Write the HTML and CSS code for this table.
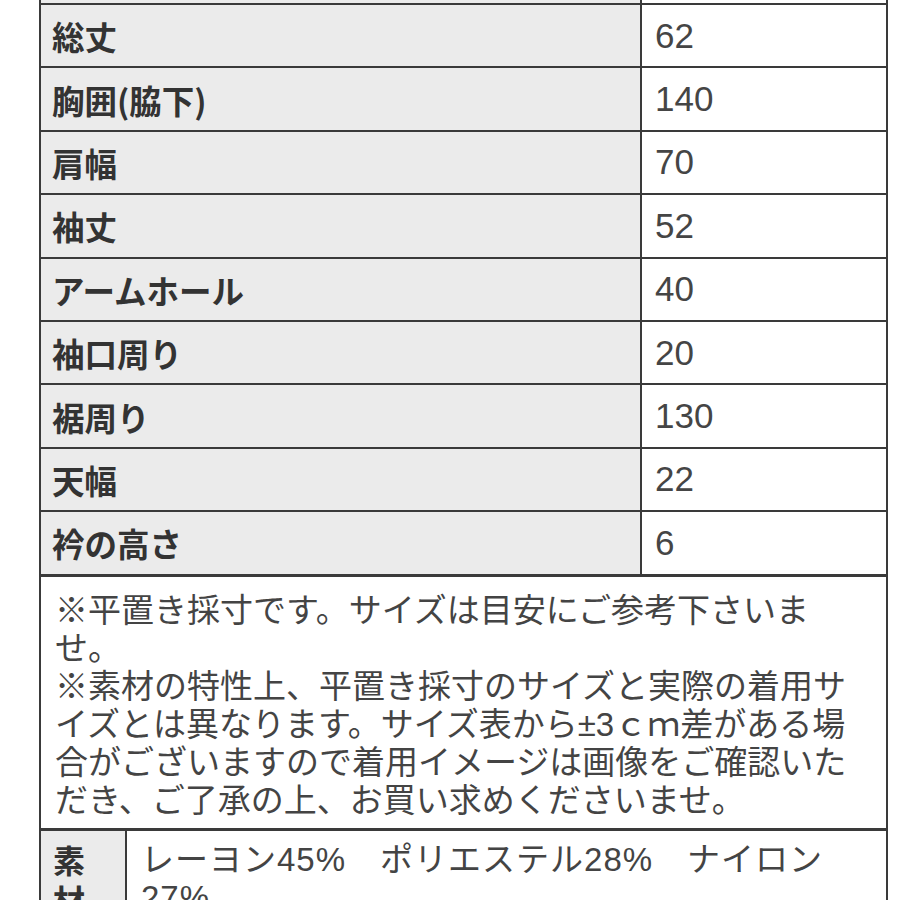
FILE: index.html
```html
<!DOCTYPE html>
<html lang="ja">
<head>
<meta charset="utf-8">
<title>サイズ表</title>
<link rel="stylesheet" href="styles.css">
</head>
<body>
<div class="sheet">
  <div class="row"><div class="label"></div><div class="value"></div></div>
  <div class="row"><div class="label">総丈</div><div class="value">62</div></div>
  <div class="row"><div class="label">胸囲(脇下)</div><div class="value">140</div></div>
  <div class="row"><div class="label">肩幅</div><div class="value">70</div></div>
  <div class="row"><div class="label">袖丈</div><div class="value">52</div></div>
  <div class="row"><div class="label">アームホール</div><div class="value">40</div></div>
  <div class="row"><div class="label">袖口周り</div><div class="value">20</div></div>
  <div class="row"><div class="label">裾周り</div><div class="value">130</div></div>
  <div class="row"><div class="label">天幅</div><div class="value">22</div></div>
  <div class="row row-last"><div class="label">衿の高さ</div><div class="value">6</div></div>
  <div class="notes">※平置き採寸です。サイズは目安にご参考下さいま<br>せ。<br>※素材の特性上、平置き採寸のサイズと実際の着用サ<br>イズとは異なります。サイズ表から±3ｃｍ差がある場<br>合がございますので着用イメージは画像をご確認いた<br>だき、ご了承の上、お買い求めくださいませ。</div>
  <div class="material">
    <div class="m-label">素<br>材</div>
    <div class="m-value">レーヨン45%　ポリエステル28%　ナイロン<br>27%</div>
  </div>
</div>
</body>
</html>
```

FILE: styles.css
```css
html, body {
  margin: 0;
  padding: 0;
  background: #ffffff;
}

body {
  width: 900px;
  height: 900px;
  overflow: hidden;
  font-family: "Liberation Sans", "Noto Sans CJK JP", sans-serif;
  color: #444444;
}

.sheet {
  margin: -58.4px 0 0 39px;
  width: 845px;
  border-left: 2px solid #3a3a3a;
  border-right: 2px solid #3a3a3a;
}

.row {
  display: grid;
  grid-template-columns: 601px 1fr;
  height: 61.4px;
  border-bottom: 2px solid #3a3a3a;
}

.row-last {
  border-bottom-width: 3px;
}

.label {
  background: #ebebeb;
  border-right: 2px solid #3a3a3a;
  display: flex;
  align-items: center;
  padding-left: 11px;
  font-family: "Noto Sans CJK JP", sans-serif;
  font-weight: 700;
  font-size: 32.5px;
  color: #333333;
}

.value {
  display: flex;
  align-items: center;
  padding-left: 13px;
  font-size: 35px;
  color: #454545;
}

.notes {
  padding: 15px 12px 8px 14px;
  font-size: 33px;
  line-height: 38px;
  white-space: nowrap;
  color: #444444;
  border-bottom: 3px solid #3a3a3a;
}

.material {
  display: grid;
  grid-template-columns: 86px 1fr;
  min-height: 120px;
}

.m-label {
  background: #ebebeb;
  border-right: 2px solid #3a3a3a;
  padding: 8px 0 0 12px;
  font-family: "Noto Sans CJK JP", sans-serif;
  font-weight: 700;
  font-size: 32px;
  line-height: 40px;
  color: #333333;
}

.m-value {
  padding: 10px 0 0 14px;
  font-size: 33px;
  line-height: 38px;
  letter-spacing: 1px;
  white-space: nowrap;
  color: #444444;
}
```
